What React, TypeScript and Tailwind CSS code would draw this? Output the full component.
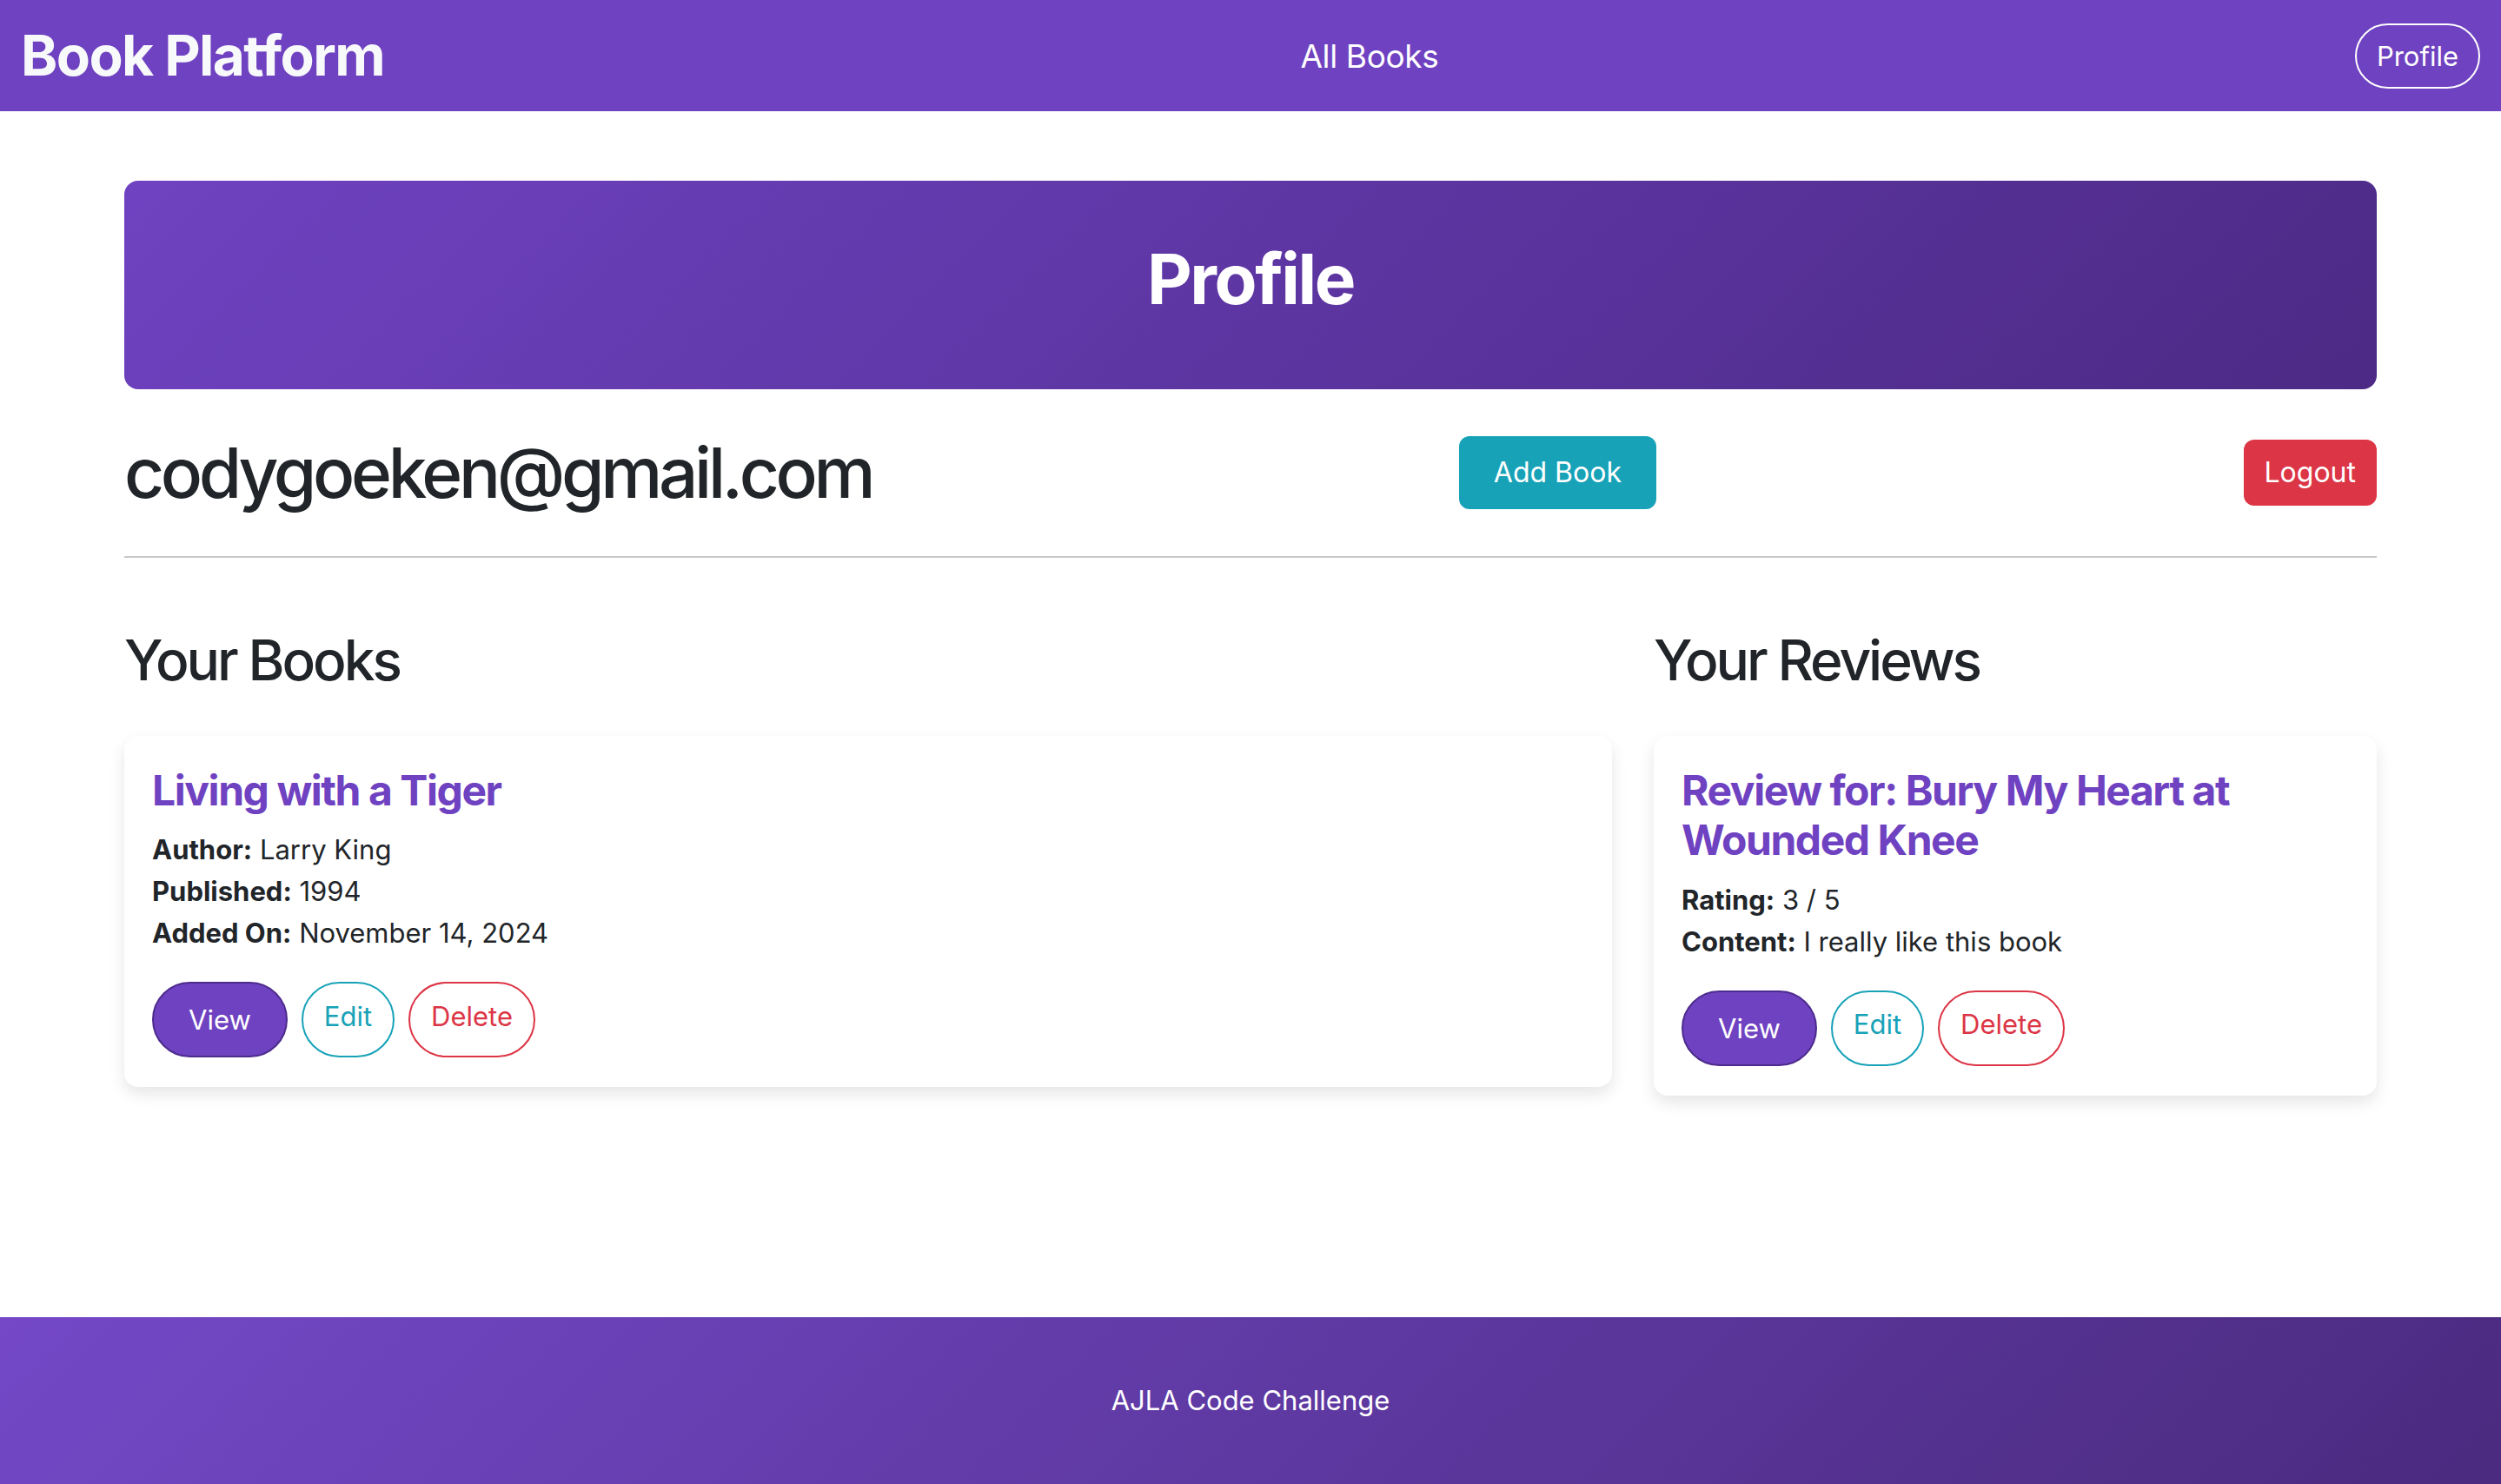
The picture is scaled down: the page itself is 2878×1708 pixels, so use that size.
import type { ReactNode } from 'react'

interface ActionProps {
  children: ReactNode
  kind: 'view' | 'edit' | 'delete'
}

function ActionButton({ children, kind }: ActionProps) {
  if (kind === 'view') {
    return (
      <button className="flex h-[87px] items-center rounded-full border-2 border-[#4d2b8c] bg-[#6f42c1] px-[40px] text-[31px] leading-none text-white">
        {children}
      </button>
    )
  }
  const tone =
    kind === 'edit'
      ? 'border-[#17a2b8] text-[#17a2b8]'
      : 'border-[#dc3545] text-[#dc3545]'
  return (
    <button
      className={`flex h-[87px] items-center rounded-full border-2 bg-white px-[24px] pb-[9px] text-[31px] leading-none ${tone}`}
    >
      {children}
    </button>
  )
}

function Actions() {
  return (
    <div className="mt-[32px] flex gap-[16px]">
      <ActionButton kind="view">View</ActionButton>
      <ActionButton kind="edit">Edit</ActionButton>
      <ActionButton kind="delete">Delete</ActionButton>
    </div>
  )
}

function Field({ label, value }: { label: string; value: string }) {
  return (
    <p className="text-[31px] leading-[48px]">
      <strong className="font-bold">{label}</strong> {value}
    </p>
  )
}

function Card({ title, children }: { title: string; children: ReactNode }) {
  return (
    <div className="rounded-[16px] bg-white px-[32px] py-[34px] shadow-[0_8px_18px_rgba(0,0,0,0.1)]">
      <h5 className="mb-[16px] text-[48px] font-bold leading-[1.2] tracking-[-0.03em] text-[#6f42c1]">
        {title}
      </h5>
      {children}
      <Actions />
    </div>
  )
}

export default function App() {
  return (
    <div className="flex min-h-screen flex-col bg-white font-['Inter','Noto_Sans',sans-serif] text-[#212529]">
      <nav className="flex h-[128px] items-center justify-between bg-[#6f42c1] px-[24px] text-white">
        <a className="text-[64px] font-bold leading-none tracking-[-0.025em] text-[#f8f9fa]">
          Book Platform
        </a>
        <a className="text-[37px] leading-none tracking-[-0.01em]">All Books</a>
        <button className="flex h-[75px] items-center rounded-full border-2 border-white px-[23px] text-[31px] leading-none">
          Profile
        </button>
      </nav>

      <main className="mx-auto w-[2592px] pt-[80px] pb-[96px]">
        <div className="rounded-[16px] bg-[linear-gradient(135deg,#6f42c1,#4c2a85)] pt-[65px] pb-[79px] text-center">
          <h1 className="text-[80px] font-bold leading-[96px] tracking-[-0.03em] text-white">
            Profile
          </h1>
        </div>

        <div className="mt-[48px] flex items-center justify-between">
          <h1 className="text-[80px] font-medium leading-[96px] tracking-[-0.054em]">
            codygoeken@gmail.com
          </h1>
          <button className="flex h-[84px] items-center rounded-[12px] bg-[#17a2b8] px-[40px] text-[32px] leading-none text-white">
            Add Book
          </button>
          <button className="flex h-[76px] items-center rounded-[12px] bg-[#dc3545] px-[24px] text-[32px] leading-none text-white">
            Logout
          </button>
        </div>

        <hr className="mt-[48px] border-t-2 border-[#c8c9ca]" />

        <div className="mt-[80px] grid grid-cols-3 items-start gap-x-[48px]">
          <section className="col-span-2">
            <h2 className="mb-[48px] text-[64px] font-medium leading-[1.2] tracking-[-0.048em]">
              Your Books
            </h2>
            <Card title="Living with a Tiger">
              <Field label="Author:" value="Larry King" />
              <Field label="Published:" value="1994" />
              <Field label="Added On:" value="November 14, 2024" />
            </Card>
          </section>
          <section>
            <h2 className="mb-[48px] text-[64px] font-medium leading-[1.2] tracking-[-0.048em]">
              Your Reviews
            </h2>
            <Card title="Review for: Bury My Heart at Wounded Knee">
              <Field label="Rating:" value="3 / 5" />
              <Field label="Content:" value="I really like this book" />
            </Card>
          </section>
        </div>
      </main>

      <footer className="mt-auto flex h-[192px] items-center justify-center bg-[linear-gradient(135deg,#7448c7,#4a2b7f)] text-[31px] text-white">
        AJLA Code Challenge
      </footer>
    </div>
  )
}
